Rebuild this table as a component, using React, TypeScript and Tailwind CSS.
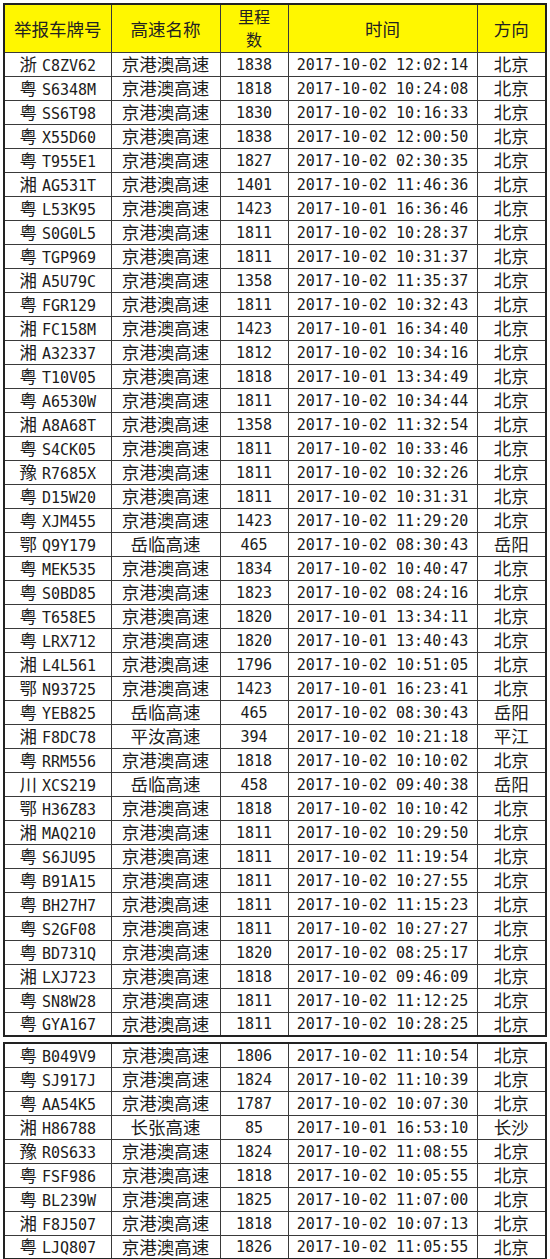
import React from "react";

type Row = [string, string, string, string, string, string];

// plate prefix, plate, road, mileage, time, direction
const firstRows: Row[] = [
  ["浙", "C8ZV62", "京港澳高速", "1838", "2017-10-02 12:02:14", "北京"],
  ["粤", "S6348M", "京港澳高速", "1818", "2017-10-02 10:24:08", "北京"],
  ["粤", "SS6T98", "京港澳高速", "1830", "2017-10-02 10:16:33", "北京"],
  ["粤", "X55D60", "京港澳高速", "1838", "2017-10-02 12:00:50", "北京"],
  ["粤", "T955E1", "京港澳高速", "1827", "2017-10-02 02:30:35", "北京"],
  ["湘", "AG531T", "京港澳高速", "1401", "2017-10-02 11:46:36", "北京"],
  ["粤", "L53K95", "京港澳高速", "1423", "2017-10-01 16:36:46", "北京"],
  ["粤", "S0G0L5", "京港澳高速", "1811", "2017-10-02 10:28:37", "北京"],
  ["粤", "TGP969", "京港澳高速", "1811", "2017-10-02 10:31:37", "北京"],
  ["湘", "A5U79C", "京港澳高速", "1358", "2017-10-02 11:35:37", "北京"],
  ["粤", "FGR129", "京港澳高速", "1811", "2017-10-02 10:32:43", "北京"],
  ["湘", "FC158M", "京港澳高速", "1423", "2017-10-01 16:34:40", "北京"],
  ["湘", "A32337", "京港澳高速", "1812", "2017-10-02 10:34:16", "北京"],
  ["粤", "T10V05", "京港澳高速", "1818", "2017-10-01 13:34:49", "北京"],
  ["粤", "A6530W", "京港澳高速", "1811", "2017-10-02 10:34:44", "北京"],
  ["湘", "A8A68T", "京港澳高速", "1358", "2017-10-02 11:32:54", "北京"],
  ["粤", "S4CK05", "京港澳高速", "1811", "2017-10-02 10:33:46", "北京"],
  ["豫", "R7685X", "京港澳高速", "1811", "2017-10-02 10:32:26", "北京"],
  ["粤", "D15W20", "京港澳高速", "1811", "2017-10-02 10:31:31", "北京"],
  ["粤", "XJM455", "京港澳高速", "1423", "2017-10-02 11:29:20", "北京"],
  ["鄂", "Q9Y179", "岳临高速", "465", "2017-10-02 08:30:43", "岳阳"],
  ["粤", "MEK535", "京港澳高速", "1834", "2017-10-02 10:40:47", "北京"],
  ["粤", "S0BD85", "京港澳高速", "1823", "2017-10-02 08:24:16", "北京"],
  ["粤", "T658E5", "京港澳高速", "1820", "2017-10-01 13:34:11", "北京"],
  ["粤", "LRX712", "京港澳高速", "1820", "2017-10-01 13:40:43", "北京"],
  ["湘", "L4L561", "京港澳高速", "1796", "2017-10-02 10:51:05", "北京"],
  ["鄂", "N93725", "京港澳高速", "1423", "2017-10-01 16:23:41", "北京"],
  ["粤", "YEB825", "岳临高速", "465", "2017-10-02 08:30:43", "岳阳"],
  ["湘", "F8DC78", "平汝高速", "394", "2017-10-02 10:21:18", "平江"],
  ["粤", "RRM556", "京港澳高速", "1818", "2017-10-02 10:10:02", "北京"],
  ["川", "XCS219", "岳临高速", "458", "2017-10-02 09:40:38", "岳阳"],
  ["鄂", "H36Z83", "京港澳高速", "1818", "2017-10-02 10:10:42", "北京"],
  ["湘", "MAQ210", "京港澳高速", "1811", "2017-10-02 10:29:50", "北京"],
  ["粤", "S6JU95", "京港澳高速", "1811", "2017-10-02 11:19:54", "北京"],
  ["粤", "B91A15", "京港澳高速", "1811", "2017-10-02 10:27:55", "北京"],
  ["粤", "BH27H7", "京港澳高速", "1811", "2017-10-02 11:15:23", "北京"],
  ["粤", "S2GF08", "京港澳高速", "1811", "2017-10-02 10:27:27", "北京"],
  ["粤", "BD731Q", "京港澳高速", "1820", "2017-10-02 08:25:17", "北京"],
  ["湘", "LXJ723", "京港澳高速", "1818", "2017-10-02 09:46:09", "北京"],
  ["粤", "SN8W28", "京港澳高速", "1811", "2017-10-02 11:12:25", "北京"],
  ["粤", "GYA167", "京港澳高速", "1811", "2017-10-02 10:28:25", "北京"],
];

const secondRows: Row[] = [
  ["粤", "B049V9", "京港澳高速", "1806", "2017-10-02 11:10:54", "北京"],
  ["粤", "SJ917J", "京港澳高速", "1824", "2017-10-02 11:10:39", "北京"],
  ["粤", "AA54K5", "京港澳高速", "1787", "2017-10-02 10:07:30", "北京"],
  ["湘", "H86788", "长张高速", "85", "2017-10-01 16:53:10", "长沙"],
  ["豫", "R0S633", "京港澳高速", "1824", "2017-10-02 11:08:55", "北京"],
  ["粤", "FSF986", "京港澳高速", "1818", "2017-10-02 10:05:55", "北京"],
  ["粤", "BL239W", "京港澳高速", "1825", "2017-10-02 11:07:00", "北京"],
  ["湘", "F8J507", "京港澳高速", "1818", "2017-10-02 10:07:13", "北京"],
  ["粤", "LJQ807", "京港澳高速", "1826", "2017-10-02 11:05:55", "北京"],
];

const cjkFont = "font-['Noto_Sans_CJK_SC',sans-serif]";
const cjk = `${cjkFont} text-[17.5px]`;
const mono = "font-['DejaVu_Sans_Mono','Liberation_Mono',monospace] text-[15px]";
const border = "border border-[#3a3a3a] p-0 text-center align-middle whitespace-nowrap";
const cell = `${border} leading-none`;
const head = `${border} ${cjkFont} font-normal text-[#222]`;

function Cols() {
  return (
    <colgroup>
      <col className="w-[107px]" />
      <col className="w-[109px]" />
      <col className="w-[68px]" />
      <col className="w-[189px]" />
      <col className="w-[69px]" />
    </colgroup>
  );
}

function DataRow({ row }: { row: Row }) {
  const [prov, plate, road, km, time, dir] = row;
  return (
    <tr className="h-[24px]">
      <td className={cell}>
        <span className={cjk}>{prov}</span>
        <span className={`${mono} ml-[5px]`}>{plate}</span>
      </td>
      <td className={cell}>
        <span className={cjk}>{road}</span>
      </td>
      <td className={cell}>
        <span className={mono}>{km}</span>
      </td>
      <td className={cell}>
        <span className={mono}>{time}</span>
      </td>
      <td className={cell}>
        <span className={cjk}>{dir}</span>
      </td>
    </tr>
  );
}

export default function App() {
  return (
    <div className="w-[550px] h-[1259px] bg-white text-[#1c1c1c] pl-[3px] pt-[3px] flex flex-col gap-[5px]">
      <table className="table-fixed border-collapse border-2 border-[#222] w-[542px]">
        <Cols />
        <thead>
          <tr className="h-[48px] bg-[#fff700]">
            <th className={`${head} text-[17.5px] leading-none`}>举报车牌号</th>
            <th className={`${head} text-[17.5px] leading-none`}>高速名称</th>
            <th className={`${head} text-[16px] leading-[23px]`}>
              <div>里程</div>
              <div>数</div>
            </th>
            <th className={`${head} text-[17.5px] leading-none`}>时间</th>
            <th className={`${head} text-[17.5px] leading-none`}>方向</th>
          </tr>
        </thead>
        <tbody>
          {firstRows.map((r) => (
            <DataRow key={r[1]} row={r} />
          ))}
        </tbody>
      </table>
      <table className="table-fixed border-collapse border-2 border-[#222] w-[542px]">
        <Cols />
        <tbody>
          {secondRows.map((r) => (
            <DataRow key={r[1]} row={r} />
          ))}
        </tbody>
      </table>
    </div>
  );
}
